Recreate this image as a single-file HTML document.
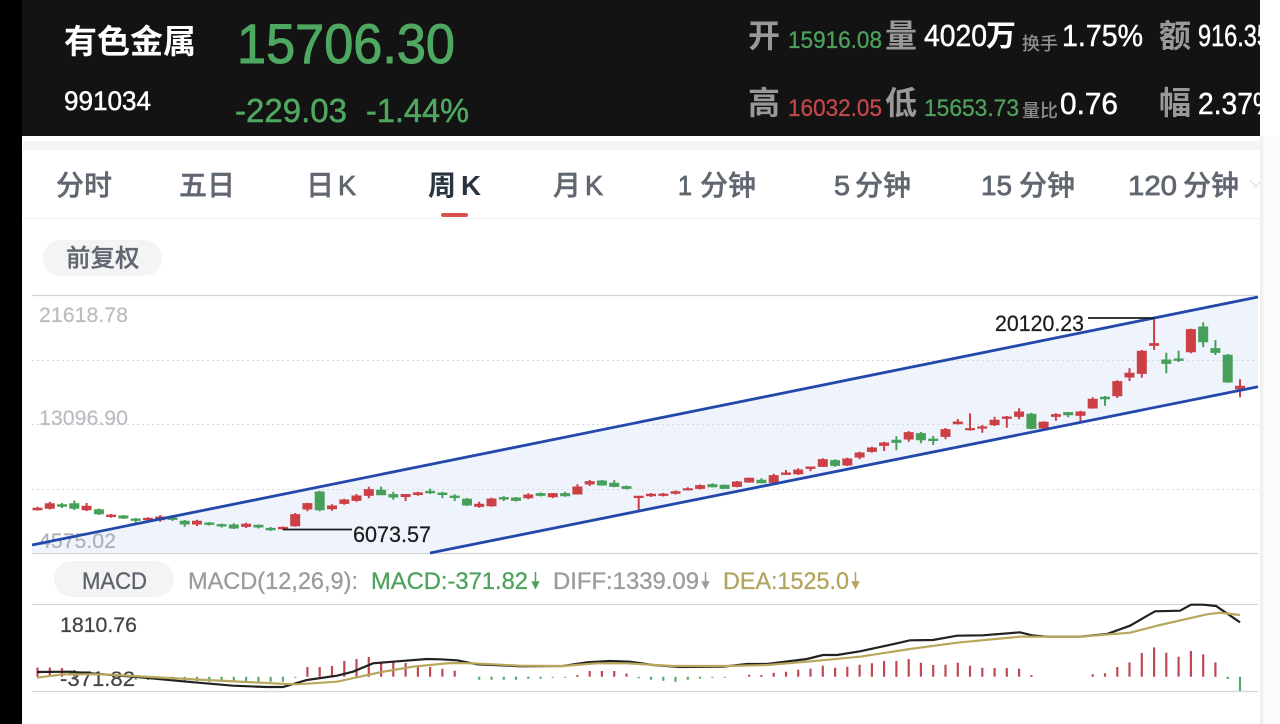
<!DOCTYPE html>
<html lang="zh">
<head>
<meta charset="utf-8">
<title>有色金属</title>
<style>
html,body{margin:0;padding:0;width:1280px;height:724px;overflow:hidden;background:#fff}
svg{display:block;position:absolute;left:0;top:0;filter:blur(.3px)}
text{font-family:"Liberation Sans","Noto Sans CJK SC",sans-serif}
.cjk{font-family:"Noto Sans CJK SC","Liberation Sans",sans-serif}
.h{font-size:32px;fill:#999;font-weight:700}
.s{font-size:18px;fill:#8f8f8f;font-weight:500}
.g{fill:#4da25c;stroke:#4da25c;stroke-width:.3}
.w{fill:#fff;stroke:#fff;stroke-width:.5}
.tab{font-size:28px;fill:#606770;font-weight:500;stroke:#606770;stroke-width:.4}
.tabn{font-size:28px;fill:#606770;stroke:#606770;stroke-width:.8}
.ax{font-size:21px;fill:#b9bdc2;stroke:#b9bdc2;stroke-width:.2}
.m{font-size:24px;stroke-width:.3}
</style>
</head>
<body>
<svg width="1280" height="724" viewBox="0 0 1280 724" xmlns="http://www.w3.org/2000/svg">
<defs>
<linearGradient id="sh" x1="0" x2="1" y1="0" y2="0"><stop offset="0" stop-color="#ececec"/><stop offset="1" stop-color="#fafafa"/></linearGradient>
<clipPath id="hc"><rect x="22" y="0" width="1238" height="136"/></clipPath>
</defs>
<rect x="0" y="0" width="1280" height="724" fill="#fff"/>
<rect x="1260" y="136" width="5" height="588" fill="url(#sh)"/>
<rect x="1265" y="136" width="15" height="588" fill="#fbfbfb"/>
<rect x="0" y="0" width="22" height="724" fill="#000"/>
<rect x="22" y="0" width="1238" height="136" fill="#131313"/>
<rect x="23" y="141" width="1237" height="9" fill="#f4f4f4"/>
<rect x="23" y="218" width="1237" height="1" fill="#f0f0f0"/>

<!-- header -->
<g clip-path="url(#hc)">
<text class="cjk" x="64" y="53" font-size="33" font-weight="700" fill="#fff" textLength="132" lengthAdjust="spacingAndGlyphs">有色金属</text>
<text x="64" y="110" font-size="27" class="w" textLength="87" lengthAdjust="spacingAndGlyphs">991034</text>
<text x="237" y="63" font-size="56" fill="#4fa860" stroke="#4fa860" stroke-width="1" textLength="218" lengthAdjust="spacingAndGlyphs">15706.30</text>
<text x="235" y="122" font-size="33" fill="#4fa860" stroke="#4fa860" stroke-width=".5" textLength="112" lengthAdjust="spacingAndGlyphs">-229.03</text>
<text x="366" y="122" font-size="33" fill="#4fa860" stroke="#4fa860" stroke-width=".5" textLength="103" lengthAdjust="spacingAndGlyphs">-1.44%</text>

<text class="cjk h" x="748" y="47">开</text>
<text x="788" y="48" font-size="24" class="g" textLength="94" lengthAdjust="spacingAndGlyphs">15916.08</text>
<text class="cjk h" x="885" y="47">量</text>
<text x="924" y="46" font-size="31" class="w" textLength="63" lengthAdjust="spacingAndGlyphs">4020</text>
<text class="cjk" x="986" y="46" font-size="30" font-weight="700" fill="#fff">万</text>
<text class="cjk s" x="1022" y="50">换手</text>
<text x="1062" y="46" font-size="31" class="w" textLength="81" lengthAdjust="spacingAndGlyphs">1.75%</text>
<text class="cjk h" x="1159" y="47">额</text>
<text x="1198" y="46" font-size="31" class="w" textLength="72" lengthAdjust="spacingAndGlyphs">916.35</text>

<text class="cjk h" x="748" y="114">高</text>
<text x="788" y="116" font-size="24" fill="#c5474a" stroke="#c5474a" stroke-width=".3" textLength="94" lengthAdjust="spacingAndGlyphs">16032.05</text>
<text class="cjk h" x="885" y="114">低</text>
<text x="924" y="116" font-size="24" class="g" textLength="95" lengthAdjust="spacingAndGlyphs">15653.73</text>
<text class="cjk s" x="1022" y="117">量比</text>
<text x="1060" y="114" font-size="31" class="w" textLength="58" lengthAdjust="spacingAndGlyphs">0.76</text>
<text class="cjk h" x="1159" y="114">幅</text>
<text x="1198" y="114" font-size="31" class="w" textLength="80" lengthAdjust="spacingAndGlyphs">2.37%</text>
</g>

<!-- tabs -->
<text class="cjk tab" x="56" y="195">分时</text>
<text class="cjk tab" x="179" y="195">五日</text>
<text class="cjk tab" x="306" y="195">日</text>
<text class="tabn" x="338" y="195" textLength="18" lengthAdjust="spacingAndGlyphs">K</text>
<text class="cjk" x="428" y="195" font-size="28" font-weight="700" fill="#2a3340">周</text>
<text x="461" y="195" font-size="28" font-weight="700" fill="#2a3340" textLength="20" lengthAdjust="spacingAndGlyphs">K</text>
<text class="cjk tab" x="553" y="195">月</text>
<text class="tabn" x="585" y="195" textLength="18" lengthAdjust="spacingAndGlyphs">K</text>
<text class="tabn" x="678" y="195" textLength="14" lengthAdjust="spacingAndGlyphs">1</text>
<text class="cjk tab" x="700" y="195">分钟</text>
<text class="tabn" x="834" y="195" textLength="16" lengthAdjust="spacingAndGlyphs">5</text>
<text class="cjk tab" x="855" y="195">分钟</text>
<text class="tabn" x="981" y="195" textLength="31" lengthAdjust="spacingAndGlyphs">15</text>
<text class="cjk tab" x="1019" y="195">分钟</text>
<text class="tabn" x="1128" y="195" textLength="49" lengthAdjust="spacingAndGlyphs">120</text>
<text class="cjk tab" x="1183" y="195">分钟</text>
<path d="M1250 180L1256 187L1260 182" fill="none" stroke="#e4e4e4" stroke-width="1.5"/>
<rect x="441" y="213" width="27" height="4" rx="2" fill="#d9504c"/>

<!-- pill -->
<rect x="43" y="240" width="119" height="36" rx="18" fill="#f4f4f5"/>
<text class="cjk" x="66" y="266.5" font-size="24.5" font-weight="500" fill="#606770" stroke="#606770" stroke-width=".3">前复权</text>

<!-- chart: axes and grid -->
<path d="M32 295.5H1258M32 553.5H1258" stroke="#d4d4d4" stroke-width="1.2" fill="none"/>
<path d="M32 360.5H1258M32 424.5H1258M32 489.5H1258" stroke="#d8d8d8" stroke-width="1" stroke-dasharray="2 3" fill="none"/>
<polygon points="32,545 1258,297 1258,386.7 430,553 32,553" fill="#eef3fc"/>
<path d="M32 489.5H1258M32 424.5H1258M32 360.5H1258" stroke="#d8d8d8" stroke-width="1" stroke-dasharray="2 3" fill="none"/>
<text class="ax" x="39" y="322" textLength="89" lengthAdjust="spacingAndGlyphs">21618.78</text>
<text class="ax" x="39" y="425" textLength="89" lengthAdjust="spacingAndGlyphs">13096.90</text>
<text class="ax" x="39" y="548" style="fill:#a9b0b8" textLength="77" lengthAdjust="spacingAndGlyphs">4575.02</text>

<!-- red wicks -->
<path fill="none" stroke="#cb3f45" stroke-width="2" d="M37.5 506.7V510.5M49.8 501.7V509.5M86.6 503V511M111.1 514V517.7M147.9 517.3V521M160.2 515V521.7M197 519.7V526M246.1 522.7V528M282.9 526.5V530M295.2 513V526.7M307.4 502.7V511.3M332 504.3V510.7M344.3 498.7V504.7M356.5 494V501.7M368.8 486.7V498.3M405.6 494V501M417.9 491.7V495.7M479.2 501.7V507.7M491.5 497.7V506.7M528.3 493.3V499.3M552.8 493.3V498.3M577.4 484.3V494.3M589.7 480V486M638.7 496V511M651 493V497M663.3 493V496.5M675.5 490.5V494.5M687.8 487.3V490.5M700.1 484.5V489.5M736.9 481V487.3M749.2 477.5V482.8M773.7 473.7V483M786 470V475M798.2 468.3V475M810.5 466.7V471.3M822.8 458.3V467M847.3 457.7V466M859.6 451.7V459.3M871.9 446.7V452.7M884.1 441.7V451M908.7 431V441.7M945.5 428V439.3M957.8 419V424.5M970 413.3V430.7M982.3 425V432.7M994.6 416.7V426M1006.8 416V427.7M1019.1 408.3V419.3M1043.6 421.3V429M1055.9 413.3V420.7M1080.5 410.7V422.7M1092.7 397.3V408.7M1117.3 380.3V398M1129.5 368.3V381M1141.8 350V377.7M1154.1 318.3V350M1190.9 328.7V353.3M1240 379.3V397.3"/>
<!-- red bodies -->
<path fill="none" stroke="#cb3f45" stroke-width="10" d="M37.5 507.8V510.2M49.8 503.3V508.7M86.6 505.8V510.2M111.1 514.6V517M147.9 517.9V520.3M160.2 516.5V520.2M197 520.8V524.5M246.1 523.8V526.9M282.9 526.9V529.3M295.2 514.1V526.2M307.4 503.1V509.5M332 505.5V509.2M344.3 499.5V503.9M356.5 495.5V500.9M368.8 489.1V495.9M405.6 494V497M417.9 492.4V495M479.2 503.8V506.9M491.5 498.5V506.2M528.3 494.5V498.2M552.8 493.1V497.2M577.4 486.5V494.5M589.7 481.1V484.5M638.7 495.8V498M651 493.8V496.2M663.3 493.6V495.9M675.5 491.3V493.7M687.8 488.3V490.4M700.1 485.1V488.9M736.9 481.5V486.9M749.2 477.8V482.5M773.7 475.1V482.9M786 472.5V474.9M798.2 469.5V474.2M810.5 466.5V468.9M822.8 459.1V466.9M847.3 458.5V465.5M859.6 452.5V457.5M871.9 447.5V451.9M884.1 442.5V445.9M908.7 432.1V439.5M945.5 429.1V436.9M957.8 421.5V424.2M970 428.1V430.2M982.3 426.4V428.6M994.6 419.8V425.2M1006.8 416.5V418.9M1019.1 411.5V416.9M1043.6 421.8V428.5M1055.9 414.1V416.9M1080.5 411.5V415.9M1092.7 398.8V408.5M1117.3 381.1V396.2M1129.5 372.8V377.5M1141.8 350.8V373.9M1154.1 343.1V345.9M1190.9 329.1V352.2M1240 385.8V389.2"/>
<!-- green wicks -->
<path fill="none" stroke="#46a05a" stroke-width="2" d="M62 503V508M74.3 500.5V510M98.9 508.5V515M123.4 515V519M135.7 518V522.7M172.5 517V521M184.7 520V526.7M209.3 522V525.5M221.6 523.5V527.5M233.8 523.3V529M258.4 524.5V528.5M270.6 527V531M319.7 490.7V511.3M381.1 486.7V495.3M393.3 491.7V499.7M430.1 488.7V494M442.4 491.7V498.3M454.7 494.3V501M467 498V506M503.8 496.3V501M516 497V501.5M540.6 492.5V496.5M565.1 491.7V496.7M601.9 480V485.7M614.2 480.3V487.3M626.5 485.5V489.5M712.4 483.3V487.5M724.6 484.5V489M761.4 478.3V483.5M835.1 459.3V466.7M896.4 436.3V450.3M920.9 432V443.3M933.2 436V445M1031.4 412.7V429.3M1068.2 412V417.3M1105 396V405.7M1166.3 352.7V373.3M1178.6 350.7V362M1203.2 322.3V347.3M1215.4 340V355M1227.7 354V382.7"/>
<!-- green bodies -->
<path fill="none" stroke="#46a05a" stroke-width="10" d="M62 504.3V506.7M74.3 503.3V508.7M98.9 509.3V514.2M123.4 515.5V518.5M135.7 518.5V520.9M172.5 517.5V519.9M184.7 520.8V524.5M209.3 522.5V524.9M221.6 524.1V526.5M233.8 524.5V528.5M258.4 524.8V527.5M270.6 527.9V530.3M319.7 491.5V510.2M381.1 489.8V495.2M393.3 494.1V497.5M430.1 490.9V493.3M442.4 492.6V495M454.7 495.6V498M467 498.8V505.5M503.8 497.1V499.5M516 497.5V500.9M540.6 493.1V495.9M565.1 493.1V496.2M601.9 480.5V485.5M614.2 482.8V486.9M626.5 486.1V488.9M712.4 484.1V487.2M724.6 484.8V488.9M761.4 479.8V483.2M835.1 460.1V465.9M896.4 439.8V442.9M920.9 433.1V440.2M933.2 438.6V441M1031.4 413.8V428.9M1068.2 412.1V415.2M1105 396.8V399.2M1166.3 359.5V363.9M1178.6 358.5V360.9M1203.2 326.5V342.2M1215.4 348.1V352.9M1227.7 354.8V382.5"/>

<!-- channel -->
<path d="M32 545L1258 297M430 553L1258 386.7" stroke="#2348ac" stroke-width="2.8" fill="none"/>

<!-- annotations -->
<path d="M1088 318H1154M283 529.5H352" stroke="#1b1b1b" stroke-width="1.8" fill="none"/>
<text x="995" y="331" font-size="22" fill="#1c1c1c" stroke="#1c1c1c" stroke-width=".25" textLength="89" lengthAdjust="spacingAndGlyphs">20120.23</text>
<text x="353" y="542" font-size="22" fill="#1c1c1c" stroke="#1c1c1c" stroke-width=".25" textLength="78" lengthAdjust="spacingAndGlyphs">6073.57</text>

<!-- MACD legend -->
<rect x="54" y="561" width="120" height="36" rx="18" fill="#f4f4f5"/>
<text class="m" x="82" y="589" fill="#5c636c" stroke="#5c636c" textLength="65" lengthAdjust="spacingAndGlyphs">MACD</text>
<text class="m" x="188" y="589" fill="#9b9b9b" stroke="#9b9b9b" textLength="170" lengthAdjust="spacingAndGlyphs">MACD(12,26,9):</text>
<text class="m" x="371" y="589" fill="#4da25c" stroke="#4da25c" textLength="157" lengthAdjust="spacingAndGlyphs">MACD:-371.82</text>
<path d="M535.5 572V587M532.5 582L535.5 588L538.5 582Z" stroke="#4da25c" stroke-width="1.5" fill="#4da25c"/>
<text class="m" x="553" y="589" fill="#9b9b9b" stroke="#9b9b9b" textLength="146" lengthAdjust="spacingAndGlyphs">DIFF:1339.09</text>
<path d="M705.5 572V587M702.5 582L705.5 588L708.5 582Z" stroke="#9b9b9b" stroke-width="1.5" fill="#9b9b9b"/>
<text class="m" x="723" y="589" fill="#b3a55e" stroke="#b3a55e" textLength="126" lengthAdjust="spacingAndGlyphs">DEA:1525.0</text>
<path d="M855.5 572V587M852.5 582L855.5 588L858.5 582Z" stroke="#b3a55e" stroke-width="1.5" fill="#b3a55e"/>

<!-- MACD panel -->
<path d="M32 604.5H1258M32 691.5H1258" stroke="#d6d6d6" stroke-width="1.2" fill="none"/>
<text x="60" y="632" font-size="21.5" fill="#444" stroke="#444" stroke-width=".25" textLength="77" lengthAdjust="spacingAndGlyphs">1810.76</text>
<text x="60" y="686" font-size="21.5" fill="#444" stroke="#444" stroke-width=".25" textLength="75" lengthAdjust="spacingAndGlyphs">-371.82</text>

<path fill="none" stroke="#bf4a54" stroke-width="2.2" d="M37.5 667.5V676.7M49.8 667.5V676.7M62 668V676.7M74.3 670V676.7M307.4 667V676.7M319.7 667V676.7M332 666V676.7M344.3 661V676.7M356.5 659V676.7M368.8 657V676.7M381.1 662V676.7M393.3 662V676.7M405.6 663V676.7M417.9 665V676.7M430.1 667V676.7M442.4 668.7V676.7M454.7 670.7V676.7M577.4 675V676.7M589.7 671V676.7M601.9 671V676.7M614.2 671V676.7M626.5 673.5V676.7M749.2 674.7V676.7M761.4 675V676.7M773.7 672.7V676.7M786 671.7V676.7M798.2 669.7V676.7M810.5 668.7V676.7M822.8 665.7V676.7M835.1 667.7V676.7M847.3 666.7V676.7M859.6 664.7V676.7M871.9 663.2V676.7M884.1 661V676.7M896.4 661V676.7M908.7 659V676.7M920.9 662.7V676.7M933.2 665V676.7M945.5 664.7V676.7M957.8 662.7V676.7M970 665.7V676.7M982.3 667.7V676.7M994.6 668V676.7M1006.8 668V676.7M1019.1 668.7V676.7M1031.4 675V676.7M1092.7 674.2V676.7M1105 673.2V676.7M1117.3 667V676.7M1129.5 662.4V676.7M1141.8 653V676.7M1154.1 647.4V676.7M1166.3 652.7V676.7M1178.6 656.7V676.7M1190.9 651V676.7M1203.2 654.4V676.7M1215.4 662.4V676.7"/>
<path fill="none" stroke="#5aa86a" stroke-width="2.2" d="M135.7 676.7V679.7M147.9 676.7V680M160.2 676.7V680M172.5 676.7V680.7M184.7 676.7V681M197 676.7V681M209.3 676.7V681.7M221.6 676.7V681.7M233.8 676.7V681.7M246.1 676.7V681.7M258.4 676.7V681.7M270.6 676.7V681.7M282.9 676.7V681.7M295.2 676.7V677.7M479.2 676.7V679.7M491.5 676.7V679.7M503.8 676.7V679.7M516 676.7V679.7M528.3 676.7V678.7M540.6 676.7V678.7M552.8 676.7V677.7M565.1 676.7V677.7M638.7 676.7V678.2M651 676.7V679.7M663.3 676.7V680.7M675.5 676.7V681.7M687.8 676.7V679.7M700.1 676.7V678.7M712.4 676.7V677.7M724.6 676.7V677.7M1227.7 676.7V679M1240 676.7V691"/>

<polyline fill="none" stroke="#222" stroke-width="2.2" points="37,672 70,671.7 133,676.7 187,681.7 233,685.7 267,687 283,687 307,680 337,675.7 353,671.7 373,663.3 393,661.7 427,659 440,659.3 457,660.3 477,664.3 520,666.3 563,666 587,662.3 610,661 630,661.7 653,665 680,667 723,666.7 747,664 767,664 807,659 823,655 837,655 860,651.3 897,643.3 910,640.3 933,640 957,635.7 983,635.3 1020,632.3 1032,635.3 1047,636.7 1080,636.7 1107,634 1130,625.7 1155,611.3 1180,610.7 1191,604.7 1203,604.7 1216,606 1240,622.3"/>
<polyline fill="none" stroke="#b7a75c" stroke-width="2.2" points="37,677.7 63,674.3 103,674.3 187,679 280,683.7 297,684.3 337,681.7 380,672.3 413,666.7 450,663 473,663.3 520,665.7 563,666 597,663.3 627,663.3 673,666 727,666 767,665 807,661.7 860,656.7 910,649 957,642.7 1020,636.7 1080,636.7 1130,632.7 1160,625 1207,614.3 1220,612.7 1240,615"/>
</svg>
</body>
</html>
